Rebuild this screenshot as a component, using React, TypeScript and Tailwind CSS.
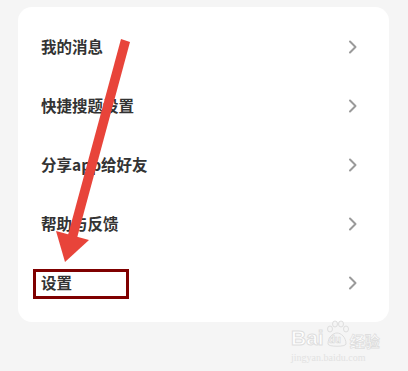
import React from 'react';

const items = ['我的消息', '快捷搜题设置', '分享app给好友', '帮助与反馈', '设置'];

function Chevron() {
  return (
    <svg width="10" height="14" viewBox="0 0 10 14" fill="none">
      <path d="M2 1.5 L7.5 7 L2 12.5" stroke="#9a9a9a" strokeWidth="2" strokeLinecap="round" strokeLinejoin="round" />
    </svg>
  );
}

export default function App() {
  return (
    <div
      className="relative w-[408px] h-[371px] bg-[#f5f5f5] overflow-hidden pt-[7px] pl-[18px]"
      style={{ fontFamily: '"Noto Sans CJK SC", "Noto Sans", sans-serif' }}
    >
      {/* menu card */}
      <div className="w-[371px] bg-white rounded-[14px] py-[10px] pl-[23px] pr-[31px]">
        {items.map((label) => (
          <div key={label} className="h-[59px] flex items-center justify-between">
            <span className="text-[15.5px] font-bold text-[#333333]">{label}</span>
            <Chevron />
          </div>
        ))}
      </div>

      {/* annotation box */}
      <div className="absolute left-[33px] top-[269px] w-[96px] h-[30px] border-[3px] border-[#7f0000]" />

      {/* annotation arrow */}
      <svg className="absolute left-0 top-0" width="408" height="371" viewBox="0 0 408 371">
        <polygon points="121,39 130,42 77,238 68,235" fill="#e8443a" />
        <polygon points="56,231 89,240 65,262" fill="#e8443a" />
      </svg>

      {/* watermark */}
      <div className="absolute left-[291px] top-[320px] flex flex-col items-start select-none">
        <div className="flex items-end">
          <span
            className="text-[21px] font-bold leading-none text-white"
            style={{ fontFamily: '"Liberation Sans", sans-serif', WebkitTextStroke: '1px #dedede' }}
          >
            Bai
          </span>
          <div className="relative w-[24px] h-[28px] mx-[1px]">
            <svg className="absolute left-0 top-0" width="24" height="28" viewBox="0 0 24 28">
              <g fill="none" stroke="#dedede" strokeWidth="1">
                <ellipse cx="5" cy="9" rx="2.5" ry="3" />
                <ellipse cx="10" cy="4" rx="2.5" ry="3" />
                <ellipse cx="16" cy="4" rx="2.5" ry="3" />
                <ellipse cx="21" cy="9" rx="2.5" ry="3" />
                <path d="M3 24 C3 17 8 13 12 13 C16 13 21 17 21 24 C21 27 3 27 3 24 Z" />
              </g>
            </svg>
            <span
              className="absolute left-[4px] top-[15px] text-[10px] font-bold leading-none text-white"
              style={{ fontFamily: '"Liberation Sans", sans-serif', WebkitTextStroke: '0.6px #d6d6d6' }}
            >
              du
            </span>
          </div>
          <span
            className="text-[15px] font-bold leading-none text-white"
            style={{ WebkitTextStroke: '0.8px #dedede' }}
          >
            经验
          </span>
        </div>
        <span
          className="mt-[5px] text-[10px] leading-none text-[#e2e2e2]"
          style={{ fontFamily: '"Liberation Serif", serif' }}
        >
          jingyan.baidu.com
        </span>
      </div>
    </div>
  );
}
